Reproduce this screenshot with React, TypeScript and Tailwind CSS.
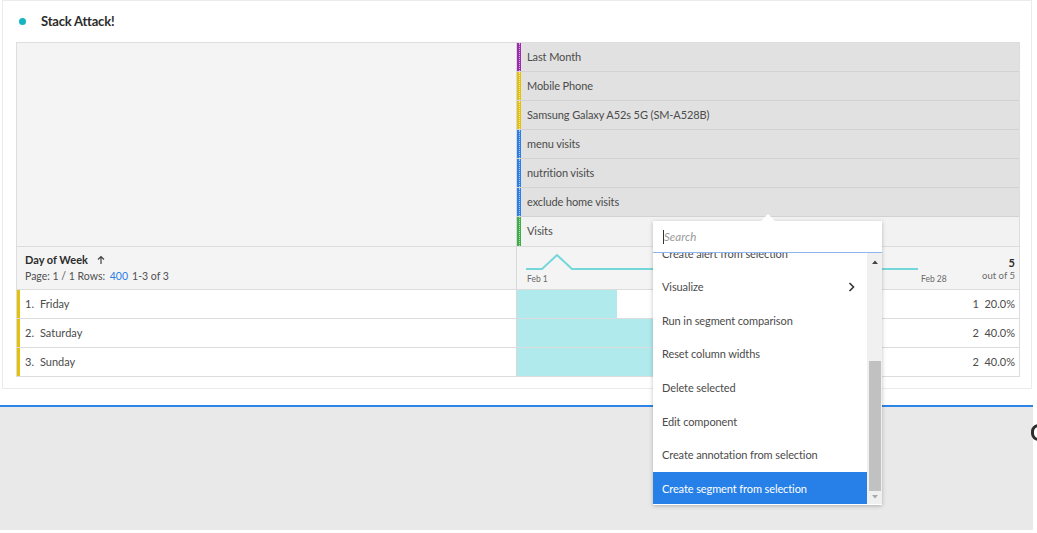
import React from "react";

const segments = [
  { label: "Last Month", color: "bg-[#9d2bb0]", bg: "bg-[#e1e1e1]" },
  { label: "Mobile Phone", color: "bg-[#e4c20c]", bg: "bg-[#e1e1e1]" },
  { label: "Samsung Galaxy A52s 5G (SM-A528B)", color: "bg-[#e4c20c]", bg: "bg-[#e1e1e1]" },
  { label: "menu visits", color: "bg-[#2d7ee6]", bg: "bg-[#e1e1e1]" },
  { label: "nutrition visits", color: "bg-[#2d7ee6]", bg: "bg-[#e1e1e1]" },
  { label: "exclude home visits", color: "bg-[#2d7ee6]", bg: "bg-[#e1e1e1]" },
  { label: "Visits", color: "bg-[#3fae49]", bg: "bg-[#f2f2f2]" },
];

const rows = [
  { n: "1.", day: "Friday", v: 1, pct: 20 },
  { n: "2.", day: "Saturday", v: 2, pct: 40 },
  { n: "3.", day: "Sunday", v: 2, pct: 40 },
];

const menuItems = [
  "Create alert from selection",
  "Visualize",
  "Run in segment comparison",
  "Reset column widths",
  "Delete selected",
  "Edit component",
  "Create annotation from selection",
  "Create segment from selection",
];

function ColorBar({ color }: { color: string }) {
  return (
    <div className={`w-[4px] h-full ${color} flex justify-center`}>
      <div className="h-full border-l border-dotted border-white/60" />
    </div>
  );
}

export default function App() {
  return (
    <div
      className="relative w-[1037px] h-[533px] bg-white overflow-hidden text-[#4b4b4b]"
      style={{ fontFamily: "Lato, 'Noto Sans', sans-serif" }}
    >
      {/* Panel */}
      <div className="ml-[2px] w-[1030px] h-[389px] border border-[#ebebeb] bg-white">
        <div className="h-[41px] flex items-center pl-[16px]">
          <div className="w-[7px] h-[7px] rounded-full bg-[#12b5bf]" />
          <div className="ml-[15px] text-[13px] font-bold text-[#2c2c2c] tracking-[-0.2px]">Stack Attack!</div>
        </div>

        {/* Table */}
        <div className="ml-[13px] w-[1004px] border border-[#dddddd] bg-white">
          {/* Segment header */}
          <div className="flex">
            <div className="w-[500px] bg-[#f4f4f4] border-r border-[#d8d8d8]" />
            <div className="flex-1 flex flex-col">
              {segments.map((s, i) => (
                <div
                  key={i}
                  className={`h-[29px] flex ${s.bg} ${i < segments.length - 1 ? "border-b border-[#d2d2d2]" : ""}`}
                >
                  <ColorBar color={s.color} />
                  <div className="flex items-center pl-[6px] text-[11px] tracking-[-0.1px] text-[#4b4b4b]">{s.label}</div>
                </div>
              ))}
            </div>
          </div>

          {/* Column header */}
          <div className="flex h-[43px] border-t border-[#dcdcdc] bg-[#f4f4f4]">
            <div className="w-[500px] border-r border-[#d8d8d8] pl-[8px] pt-[6px]">
              <div className="flex items-center text-[11px] font-bold text-[#2c2c2c] leading-[14px]">
                Day of Week
                <svg width="10" height="10" viewBox="0 0 10 10" className="ml-[8px]">
                  <path d="M5 9V2M2 4.5L5 1.5L8 4.5" stroke="#444" strokeWidth="1.2" fill="none" />
                </svg>
              </div>
              <div className="mt-[2px] text-[10.5px] leading-[14px] text-[#505050]">
                Page: 1 / 1 Rows: <span className="ml-[2px] text-[#2d7ee6]">400</span>
                <span className="ml-[4px]">1-3 of 3</span>
              </div>
            </div>
            <div className="flex-1 relative">
              <svg width="420" height="30" className="absolute left-[9px] top-[5px]">
                <polyline
                  points="0,17 16,17 31,3 46,17 392,17"
                  fill="none"
                  stroke="#74d8da"
                  strokeWidth="2"
                />
              </svg>
              <div className="absolute left-[10px] top-[26px] text-[8.5px] text-[#6b6b6b]">Feb 1</div>
              <div className="absolute left-[404px] top-[26px] text-[8.5px] text-[#6b6b6b]">Feb 28</div>
              <div className="absolute right-[4px] top-[9px] text-right leading-[13px]">
                <div className="text-[11px] font-bold text-[#2c2c2c]">5</div>
                <div className="text-[9.5px] text-[#6b6b6b]">out of 5</div>
              </div>
            </div>
          </div>

          {/* Rows */}
          {rows.map((r, i) => (
            <div key={i} className="flex h-[29px] border-t border-[#dcdcdc]">
              <div className="w-[500px] border-l-[3px] border-l-[#e4c20c] border-r border-r-[#d8d8d8] flex items-center pl-[5px] text-[11px] text-[#4b4b4b]">
                <span>{r.n}</span>
                <span className="ml-[6px]">{r.day}</span>
              </div>
              <div className="flex-1 relative flex items-center justify-end pr-[4px]">
                <div className="absolute left-0 top-0 bottom-0 bg-[#b1eaec]" style={{ width: `${r.pct}%` }} />
                <span className="relative text-[11px] text-[#4b4b4b]">
                  {r.v}&nbsp;&nbsp;{r.pct.toFixed(1)}%
                </span>
              </div>
            </div>
          ))}
        </div>
      </div>

      {/* Bottom area */}
      <div className="mt-[16px] w-[1033px] h-[2px] bg-[#2d83e6]" />
      <div className="w-[1033px] h-[123px] bg-[#e9e9e9]" />

      <div className="absolute left-[1031px] top-[424px] w-[15px] h-[17px] rounded-full border-[3px] border-[#2e2e2e]" />

      {/* Dropdown menu */}
      <div className="absolute left-[653px] top-[221px] w-[229px] h-[284px] bg-white shadow-[0_1px_4px_rgba(0,0,0,0.25)]">
        <div className="absolute -top-[7px] left-[108px] w-0 h-0 border-l-[7px] border-r-[7px] border-b-[7px] border-l-transparent border-r-transparent border-b-white" />
        <div className="h-[32px] border-b border-[#8ab8ee] flex items-center pl-[10px]">
          <div className="w-px h-[14px] bg-[#333]" />
          <span className="text-[11.5px] italic text-[#9a9a9a]">Search</span>
        </div>
        <div className="flex h-[251px]">
          <div className="w-[214px] overflow-hidden">
            <div className="-mt-[16px]">
              {menuItems.map((m, i) => {
                const active = i === menuItems.length - 1;
                return (
                  <div
                    key={i}
                    className={`h-[33.6px] flex items-center pl-[9px] pr-[12px] text-[11px] tracking-[-0.1px] ${
                      active ? "bg-[#2680e8] text-white" : "text-[#4b4b4b]"
                    }`}
                  >
                    <span className="flex-1">{m}</span>
                    {m === "Visualize" && (
                      <svg width="7" height="10" viewBox="0 0 7 10">
                        <path d="M1.5 1L5.5 5L1.5 9" stroke="#333" strokeWidth="1.6" fill="none" />
                      </svg>
                    )}
                  </div>
                );
              })}
            </div>
          </div>
          <div className="w-[15px] bg-[#f0f0f0] flex flex-col items-center">
            <svg width="8" height="6" viewBox="0 0 8 6" className="mt-[6px]">
              <path d="M1 5L4 1.5L7 5Z" fill="#444" />
            </svg>
            <div className="mt-[96px] w-[12px] h-[130px] bg-[#c1c1c1]" />
            <svg width="8" height="6" viewBox="0 0 8 6" className="mt-[3px]">
              <path d="M1 1L4 4.5L7 1Z" fill="#a8a8a8" />
            </svg>
          </div>
        </div>
      </div>
    </div>
  );
}
